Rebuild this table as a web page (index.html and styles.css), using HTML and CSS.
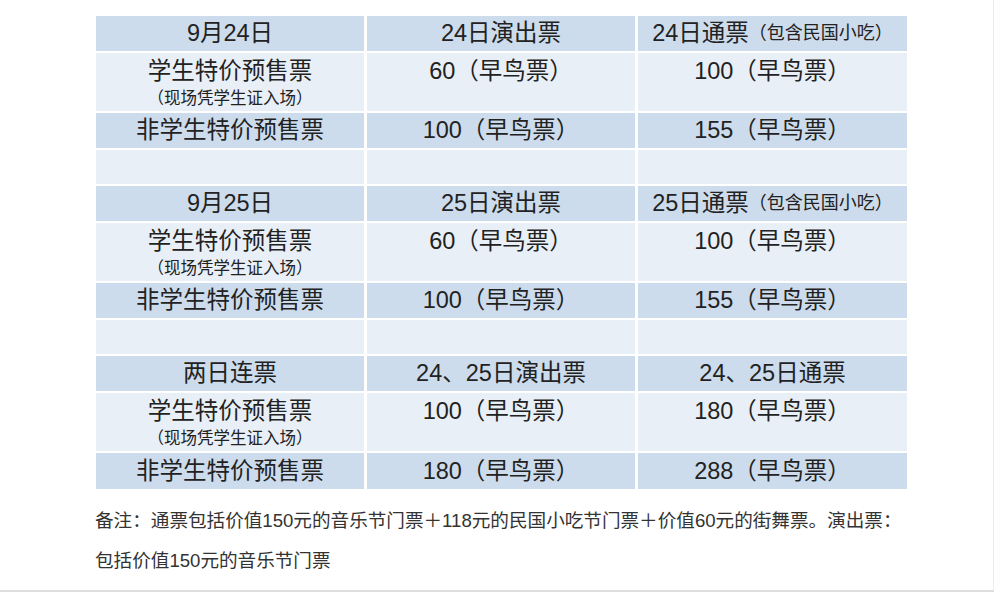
FILE: index.html
```html
<!DOCTYPE html>
<html lang="zh-CN">
<head>
<meta charset="utf-8">
<title>票价</title>
<link rel="stylesheet" href="styles.css">
</head>
<body>
<div class="page">
  <div class="tickets">
    <div class="cell head">9月24日</div>
    <div class="cell head">24日演出票</div>
    <div class="cell head">24日通票<span class="small">（包含民国小吃）</span></div>

    <div class="cell light tall"><span class="main">学生特价预售票</span><span class="note">（现场凭学生证入场）</span></div>
    <div class="cell light tall"><span class="main">60（早鸟票）</span></div>
    <div class="cell light tall"><span class="main">100（早鸟票）</span></div>

    <div class="cell head">非学生特价预售票</div>
    <div class="cell head">100（早鸟票）</div>
    <div class="cell head">155（早鸟票）</div>

    <div class="cell light"></div>
    <div class="cell light"></div>
    <div class="cell light"></div>

    <div class="cell head">9月25日</div>
    <div class="cell head">25日演出票</div>
    <div class="cell head">25日通票<span class="small">（包含民国小吃）</span></div>

    <div class="cell light tall"><span class="main">学生特价预售票</span><span class="note">（现场凭学生证入场）</span></div>
    <div class="cell light tall"><span class="main">60（早鸟票）</span></div>
    <div class="cell light tall"><span class="main">100（早鸟票）</span></div>

    <div class="cell head">非学生特价预售票</div>
    <div class="cell head">100（早鸟票）</div>
    <div class="cell head">155（早鸟票）</div>

    <div class="cell light"></div>
    <div class="cell light"></div>
    <div class="cell light"></div>

    <div class="cell head">两日连票</div>
    <div class="cell head">24、25日演出票</div>
    <div class="cell head">24、25日通票</div>

    <div class="cell light tall"><span class="main">学生特价预售票</span><span class="note">（现场凭学生证入场）</span></div>
    <div class="cell light tall"><span class="main">100（早鸟票）</span></div>
    <div class="cell light tall"><span class="main">180（早鸟票）</span></div>

    <div class="cell head">非学生特价预售票</div>
    <div class="cell head">180（早鸟票）</div>
    <div class="cell head">288（早鸟票）</div>
  </div>
  <div class="remark">
    <p>备注：通票包括价值150元的音乐节门票＋118元的民国小吃节门票＋价值60元的街舞票。演出票：</p>
    <p>包括价值150元的音乐节门票</p>
  </div>
</div>
</body>
</html>
```

FILE: styles.css
```css
html, body {
  margin: 0;
  padding: 0;
  background: #ffffff;
}

body {
  font-family: "Liberation Sans", "Noto Sans CJK SC", sans-serif;
  color: #222;
}

.page {
  width: 994px;
  height: 592px;
  border-right: 1px solid #ececec;
  border-bottom: 2px solid #dedede;
  padding: 16px 0 0 96px;
  box-sizing: border-box;
}

.tickets {
  display: grid;
  grid-template-columns: 268px 268px 269px;
  grid-template-rows: 35px 58px 35px 34px 35px 58px 35px 34px 35px 58px 36px;
  column-gap: 3px;
  row-gap: 2px;
  width: 811px;
}

.cell {
  display: flex;
  flex-direction: column;
  align-items: center;
  justify-content: center;
  font-size: 23.5px;
  line-height: 35px;
  white-space: nowrap;
  color: #222;
}

.cell.head {
  background: #cddcec;
  flex-direction: row;
}

.cell.light {
  background: #e9eff6;
}

.cell.tall {
  justify-content: flex-start;
}

.main {
  display: block;
  line-height: 37px;
}

.note {
  display: block;
  font-size: 16.5px;
  line-height: 17px;
  margin-top: 0;
}

.small {
  font-size: 18px;
}

.remark {
  margin-top: 12px;
  margin-left: -1px;
  font-size: 18.6px;
  color: #333;
}

.remark p {
  margin: 0;
  line-height: 40px;
}
```
